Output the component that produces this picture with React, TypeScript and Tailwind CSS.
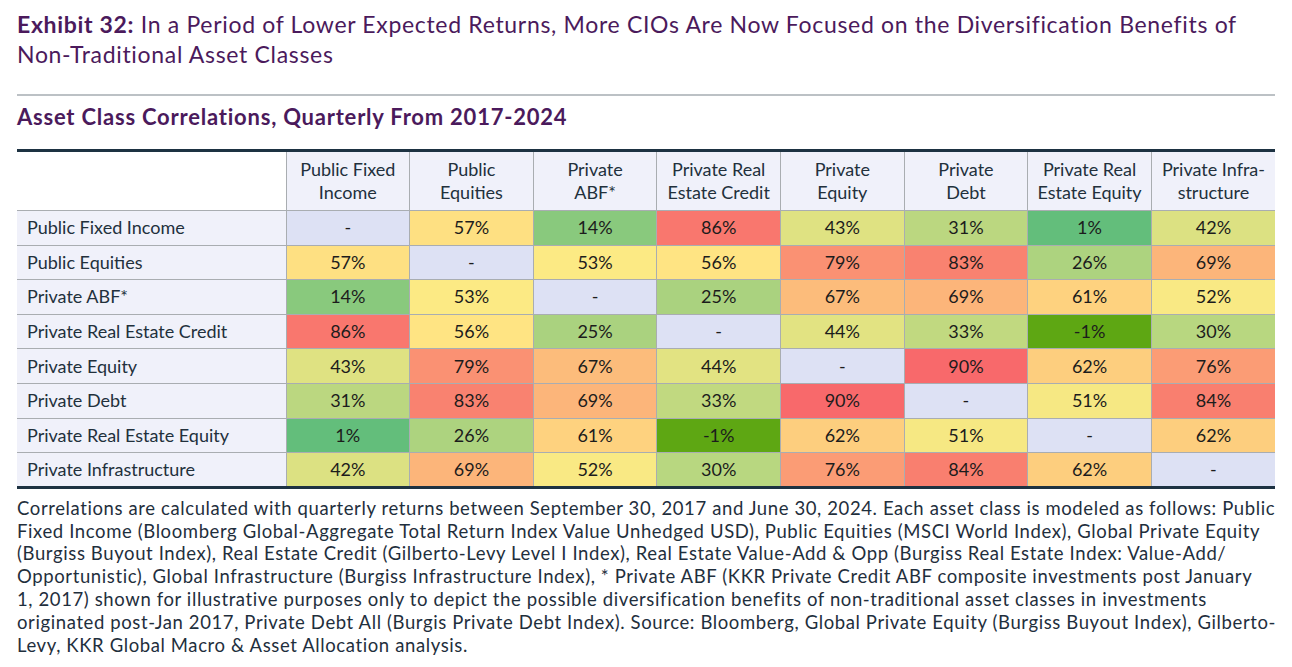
import React from 'react';

const labels = [
  'Public Fixed Income',
  'Public Equities',
  'Private ABF*',
  'Private Real Estate Credit',
  'Private Equity',
  'Private Debt',
  'Private Real Estate Equity',
  'Private Infrastructure',
];

const headers: [string, string][] = [
  ['Public Fixed', 'Income'],
  ['Public', 'Equities'],
  ['Private', 'ABF*'],
  ['Private Real', 'Estate Credit'],
  ['Private', 'Equity'],
  ['Private', 'Debt'],
  ['Private Real', 'Estate Equity'],
  ['Private Infra-', 'structure'],
];

// null = diagonal
const data: (number | null)[][] = [
  [null, 57, 14, 86, 43, 31, 1, 42],
  [57, null, 53, 56, 79, 83, 26, 69],
  [14, 53, null, 25, 67, 69, 61, 52],
  [86, 56, 25, null, 44, 33, -1, 30],
  [43, 79, 67, 44, null, 90, 62, 76],
  [31, 83, 69, 33, 90, null, 51, 84],
  [1, 26, 61, -1, 62, 51, null, 62],
  [42, 69, 52, 30, 76, 84, 62, null],
];

const footnote = [
  'Correlations are calculated with quarterly returns between September 30, 2017 and June 30, 2024. Each asset class is modeled as follows: Public',
  'Fixed Income (Bloomberg Global-Aggregate Total Return Index Value Unhedged USD), Public Equities (MSCI World Index), Global Private Equity',
  '(Burgiss Buyout Index), Real Estate Credit (Gilberto-Levy Level I Index), Real Estate Value-Add & Opp (Burgiss Real Estate Index: Value-Add/',
  'Opportunistic), Global Infrastructure (Burgiss Infrastructure Index), * Private ABF (KKR Private Credit ABF composite investments post January',
  '1, 2017) shown for illustrative purposes only to depict the possible diversification benefits of non-traditional asset classes in investments',
  'originated post-Jan 2017, Private Debt All (Burgis Private Debt Index). Source: Bloomberg, Global Private Equity (Burgiss Buyout Index), Gilberto-',
  'Levy, KKR Global Macro & Asset Allocation analysis.',
];

const GREEN = [99, 190, 123];
const YELLOW = [255, 235, 132];
const RED = [248, 105, 107];
const MIN = 1;
const MID = 54;
const MAX = 90;

function mix(a: number[], b: number[], t: number) {
  const c = a.map((v, i) => Math.round(v + (b[i] - v) * t));
  return `rgb(${c[0]}, ${c[1]}, ${c[2]})`;
}

// excel style 3-colour scale
function cellColor(v: number) {
  if (v < MIN) return 'rgb(94, 167, 19)';
  if (v <= MID) return mix(GREEN, YELLOW, (v - MIN) / (MID - MIN));
  return mix(YELLOW, RED, (v - MID) / (MAX - MID));
}

export default function App() {
  return (
    <div className="w-[1292px] min-h-[667px] bg-white px-[17px] pt-[9px] font-['Lato',sans-serif]">
      <h1 className="whitespace-nowrap text-[23px] leading-[30px] tracking-[0.68px] text-[#4b1a5c]">
        <span className="font-bold">Exhibit 32:</span> In a Period of Lower Expected Returns, More CIOs Are Now
        Focused on the Diversification Benefits of
        <br />
        Non-Traditional Asset Classes
      </h1>

      <div className="mt-[25px] h-[2px] w-[1258px] bg-[#bcc1c5]" />

      <h2 className="mt-[7px] text-[22px] leading-[28px] font-bold tracking-[0.78px] text-[#4b1a5c]">
        Asset Class Correlations, Quarterly From 2017-2024
      </h2>

      <table className="mt-[18px] w-[1258px] table-fixed border-collapse border-t-[3px] border-b-[3px] border-[#1d3242] text-[18px]">
        <colgroup>
          <col className="w-[269px]" />
          {headers.map((_, i) => (
            <col key={i} />
          ))}
        </colgroup>
        <thead>
          <tr className="h-[60px]">
            <th className="border-b border-[#a9adb1] bg-white" />
            {headers.map(([a, b], i) => (
              <th
                key={i}
                className="border-b border-l border-[#a9adb1] bg-[#f0f1fa] text-center font-normal leading-[23px] text-[#22303c]"
              >
                {a}
                <br />
                {b}
              </th>
            ))}
          </tr>
        </thead>
        <tbody>
          {data.map((row, r) => (
            <tr key={r} className="h-[34.6px]">
              <td className="border-b border-[#a9adb1] bg-[#f0f1fa] pl-[10px] text-left text-[#22303c]">
                {labels[r]}
              </td>
              {row.map((v, c) =>
                v === null ? (
                  <td key={c} className="border-b border-l border-[#a9adb1] bg-[#dde1f4] text-center text-[#1c1c1c]">
                    -
                  </td>
                ) : (
                  <td
                    key={c}
                    className="border-b border-l border-[#a9adb1] text-center text-[#1c1c1c]"
                    style={{ backgroundColor: cellColor(v) }}
                  >
                    {v}%
                  </td>
                )
              )}
            </tr>
          ))}
        </tbody>
      </table>

      <p className="mt-[8px] whitespace-nowrap text-[18.5px] leading-[22.8px] tracking-[0.61px] text-[#1f2f3d]">
        {footnote.map((line, i) => (
          <React.Fragment key={i}>
            {line}
            {i < footnote.length - 1 && <br />}
          </React.Fragment>
        ))}
      </p>
    </div>
  );
}
